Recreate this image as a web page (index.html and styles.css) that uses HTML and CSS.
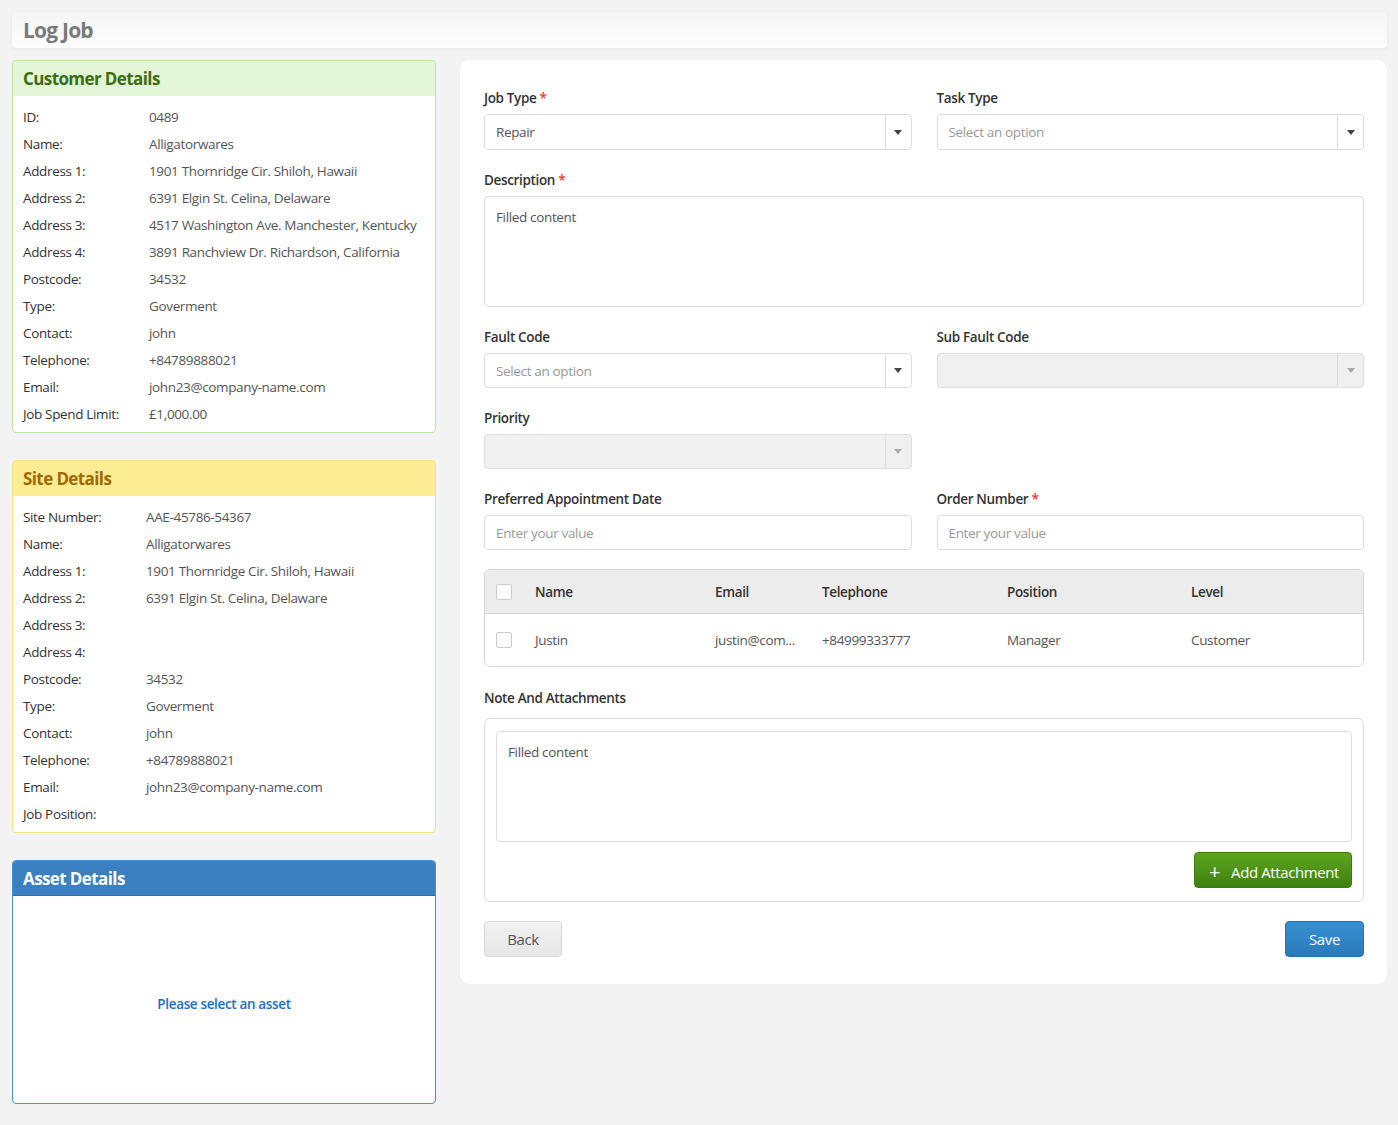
FILE: index.html
```html
<!DOCTYPE html>
<html lang="en">
<head>
    <meta charset="UTF-8">
    <title>Log Job</title>
    <link rel="stylesheet" href="styles.css">
</head>
<body>
    <div class="page-header">
        <h1>Log Job</h1>
    </div>

    <div class="layout">
        <div class="side">
            <div class="card card-green">
                <div class="card-title">Customer Details</div>
                <div class="card-body">
                    <div class="row"><span class="label">ID:</span><span>0489</span></div>
                    <div class="row"><span class="label">Name:</span><span>Alligatorwares</span></div>
                    <div class="row"><span class="label">Address 1:</span><span>1901 Thornridge Cir. Shiloh, Hawaii</span></div>
                    <div class="row"><span class="label">Address 2:</span><span>6391 Elgin St. Celina, Delaware</span></div>
                    <div class="row"><span class="label">Address 3:</span><span>4517 Washington Ave. Manchester, Kentucky</span></div>
                    <div class="row"><span class="label">Address 4:</span><span>3891 Ranchview Dr. Richardson, California</span></div>
                    <div class="row"><span class="label">Postcode:</span><span>34532</span></div>
                    <div class="row"><span class="label">Type:</span><span>Goverment</span></div>
                    <div class="row"><span class="label">Contact:</span><span>john</span></div>
                    <div class="row"><span class="label">Telephone:</span><span>+84789888021</span></div>
                    <div class="row"><span class="label">Email:</span><span>john23@company-name.com</span></div>
                    <div class="row"><span class="label">Job Spend Limit:</span><span>£1,000.00</span></div>
                </div>
            </div>

            <div class="card card-yellow">
                <div class="card-title">Site Details</div>
                <div class="card-body site">
                    <div class="row"><span class="label">Site Number:</span><span>AAE-45786-54367</span></div>
                    <div class="row"><span class="label">Name:</span><span>Alligatorwares</span></div>
                    <div class="row"><span class="label">Address 1:</span><span>1901 Thornridge Cir. Shiloh, Hawaii</span></div>
                    <div class="row"><span class="label">Address 2:</span><span>6391 Elgin St. Celina, Delaware</span></div>
                    <div class="row"><span class="label">Address 3:</span><span></span></div>
                    <div class="row"><span class="label">Address 4:</span><span></span></div>
                    <div class="row"><span class="label">Postcode:</span><span>34532</span></div>
                    <div class="row"><span class="label">Type:</span><span>Goverment</span></div>
                    <div class="row"><span class="label">Contact:</span><span>john</span></div>
                    <div class="row"><span class="label">Telephone:</span><span>+84789888021</span></div>
                    <div class="row"><span class="label">Email:</span><span>john23@company-name.com</span></div>
                    <div class="row"><span class="label">Job Position:</span><span></span></div>
                </div>
            </div>

            <div class="card card-blue">
                <div class="card-title">Asset Details</div>
                <div class="asset-empty">Please select an asset</div>
            </div>
        </div>

        <div class="panel">
            <div class="form-grid">
                <div class="field">
                    <label>Job Type <span class="req">*</span></label>
                    <div class="select first"><span class="value">Repair</span><span class="caret"></span></div>
                </div>
                <div class="field">
                    <label>Task Type</label>
                    <div class="select first"><span class="placeholder">Select an option</span><span class="caret"></span></div>
                </div>
                <div class="field wide">
                    <label>Description <span class="req">*</span></label>
                    <div class="textarea">Filled content</div>
                </div>
                <div class="field">
                    <label>Fault Code</label>
                    <div class="select"><span class="placeholder">Select an option</span><span class="caret"></span></div>
                </div>
                <div class="field">
                    <label>Sub Fault Code</label>
                    <div class="select disabled"><span></span><span class="caret"></span></div>
                </div>
                <div class="field">
                    <label>Priority</label>
                    <div class="select disabled"><span></span><span class="caret"></span></div>
                </div>
                <div class="field"></div>
                <div class="field">
                    <label>Preferred Appointment Date</label>
                    <div class="input"><span class="placeholder">Enter your value</span></div>
                </div>
                <div class="field">
                    <label>Order Number <span class="req">*</span></label>
                    <div class="input"><span class="placeholder">Enter your value</span></div>
                </div>

                <div class="contacts wide">
                    <div class="t-row t-head">
                        <span class="check"></span>
                        <span>Name</span>
                        <span>Email</span>
                        <span>Telephone</span>
                        <span>Position</span>
                        <span>Level</span>
                    </div>
                    <div class="t-row">
                        <span class="check"></span>
                        <span>Justin</span>
                        <span>justin@com...</span>
                        <span>+84999333777</span>
                        <span>Manager</span>
                        <span>Customer</span>
                    </div>
                </div>

                <div class="field wide notes-field">
                    <label>Note And Attachments</label>
                    <div class="notes">
                        <div class="textarea">Filled content</div>
                        <div class="notes-actions">
                            <button class="btn btn-green"><span class="plus">+</span>Add Attachment</button>
                        </div>
                    </div>
                </div>
            </div>

            <div class="actions">
                <button class="btn btn-grey">Back</button>
                <button class="btn btn-blue">Save</button>
            </div>
        </div>
    </div>
</body>
</html>
```

FILE: styles.css
```css
* {
    box-sizing: border-box;
}
body {
    font-family: "Open Sans", Arial, sans-serif;
    font-size: 13.5px;
    letter-spacing: -0.35px;
    color: #444;
    margin: 0;
    padding: 12px 11px 20px 12px;
    background-color: #f3f3f3;
}
.page-header {
    height: 36px;
    background: linear-gradient(to bottom, #f5f5f5, #fdfdfd);
    border-radius: 4px;
    box-shadow: 0 1px 3px rgba(0,0,0,0.06);
    display: flex;
    align-items: center;
    padding-left: 11px;
    margin-bottom: 12px;
}
.page-header h1 {
    margin: 0;
    font-size: 21px;
    font-weight: 700;
    color: #7a7a7a;
    letter-spacing: -0.8px;
}
.layout {
    display: flex;
    align-items: flex-start;
    gap: 24px;
}
.side {
    width: 424px;
    flex-shrink: 0;
    display: flex;
    flex-direction: column;
    gap: 27px;
}
.card {
    background: #fff;
    border: 1px solid #ccc;
    border-radius: 4px;
    overflow: hidden;
}
.card-title {
    height: 35px;
    display: flex;
    align-items: center;
    padding-left: 10px;
    font-size: 17px;
    font-weight: 700;
    letter-spacing: -0.6px;
}
.card-green { border-color: #bfe2a8; }
.card-green .card-title { background: #e2f5d7; color: #3c6e10; }
.card-yellow { border-color: #f5e085; }
.card-yellow .card-title { background: #fcec94; color: #a06a00; }
.card-blue { border-color: #4f8fcc; }
.card-blue .card-title { background: #3a80c1; color: #fff; border-bottom: 1px solid #2f6ea9; }
.card-body {
    padding: 7px 10px 5px;
}
.row {
    display: flex;
    height: 27px;
    align-items: center;
    color: #555;
}
.row .label {
    width: 126px;
    flex-shrink: 0;
    color: #333;
}
.site .row .label { width: 123px; }
.asset-empty {
    height: 207px;
    padding-top: 8px;
    display: flex;
    align-items: center;
    justify-content: center;
    color: #1c6fc2;
    font-weight: 600;
}
.panel {
    flex: 1;
    background: #fff;
    border-radius: 10px;
    padding: 28px 23px 27px 24px;
}
.form-grid {
    display: grid;
    grid-template-columns: 1fr 1fr;
    column-gap: 25px;
    row-gap: 20px;
}
.wide { grid-column: 1 / 3; }
.field {
    display: flex;
    flex-direction: column;
    gap: 6px;
}
.field label {
    font-weight: 600;
    color: #333;
    line-height: 20px;
}
.req { color: #e53935; }
.select, .input {
    height: 35px;
    border: 1px solid #ddd;
    border-radius: 4px;
    display: flex;
    align-items: center;
    justify-content: space-between;
    padding-left: 11px;
    color: #555;
}
.select.first { height: 36px; }
.input { padding-right: 11px; }
.placeholder { color: #999; }
.caret {
    width: 26px;
    height: 100%;
    border-left: 1px solid #ddd;
    display: flex;
    align-items: center;
    justify-content: center;
}
.caret::after {
    content: "";
    border-left: 4px solid transparent;
    border-right: 4px solid transparent;
    border-top: 5px solid #444;
}
.select.disabled { background: #f0f0f0; }
.select.disabled .caret::after { border-top-color: #aaa; }
.textarea {
    height: 111px;
    border: 1px solid #ddd;
    border-radius: 4px;
    padding: 11px;
    color: #555;
}
.contacts {
    border: 1px solid #d6d6d6;
    border-radius: 6px;
    overflow: hidden;
    margin-top: -1px;
}
.t-row {
    display: grid;
    grid-template-columns: 39px 180px 107px 185px 184px 1fr;
    align-items: center;
    height: 52px;
    padding-left: 11px;
    color: #555;
}
.t-head {
    height: 44px;
    background: #ececec;
    border-bottom: 1px solid #d6d6d6;
    color: #333;
    font-weight: 600;
}
.check {
    width: 16px;
    height: 16px;
    border: 1px solid #ccc;
    border-radius: 2px;
    background: #fff;
}
.notes-field { gap: 10px; margin-top: 1px; }
.notes {
    border: 1px solid #ddd;
    border-radius: 6px;
    padding: 12px 11px 13px 11px;
}
.notes .textarea { height: 111px; }
.notes-actions {
    display: flex;
    justify-content: flex-end;
    margin-top: 10px;
}
.btn {
    font-family: inherit;
    font-size: 15px;
    letter-spacing: -0.4px;
    height: 36px;
    border-radius: 4px;
    cursor: pointer;
}
.btn-green {
    background: linear-gradient(to bottom, #5ca51e, #3f800f);
    border: 1px solid #3b7a0e;
    color: #fff;
    padding: 0 12px 0 14px;
}
.plus {
    font-size: 20px;
    margin-right: 11px;
    position: relative;
    top: 1px;
}
.actions {
    display: flex;
    justify-content: space-between;
    margin-top: 19px;
}
.btn-grey {
    width: 78px;
    background: linear-gradient(to bottom, #f2f2f2, #e6e6e6);
    border: 1px solid #d8d8d8;
    color: #555;
}
.btn-blue {
    width: 79px;
    background: linear-gradient(to bottom, #3591d3, #2a79b8);
    border: 1px solid #2670ad;
    color: #fff;
}
```
